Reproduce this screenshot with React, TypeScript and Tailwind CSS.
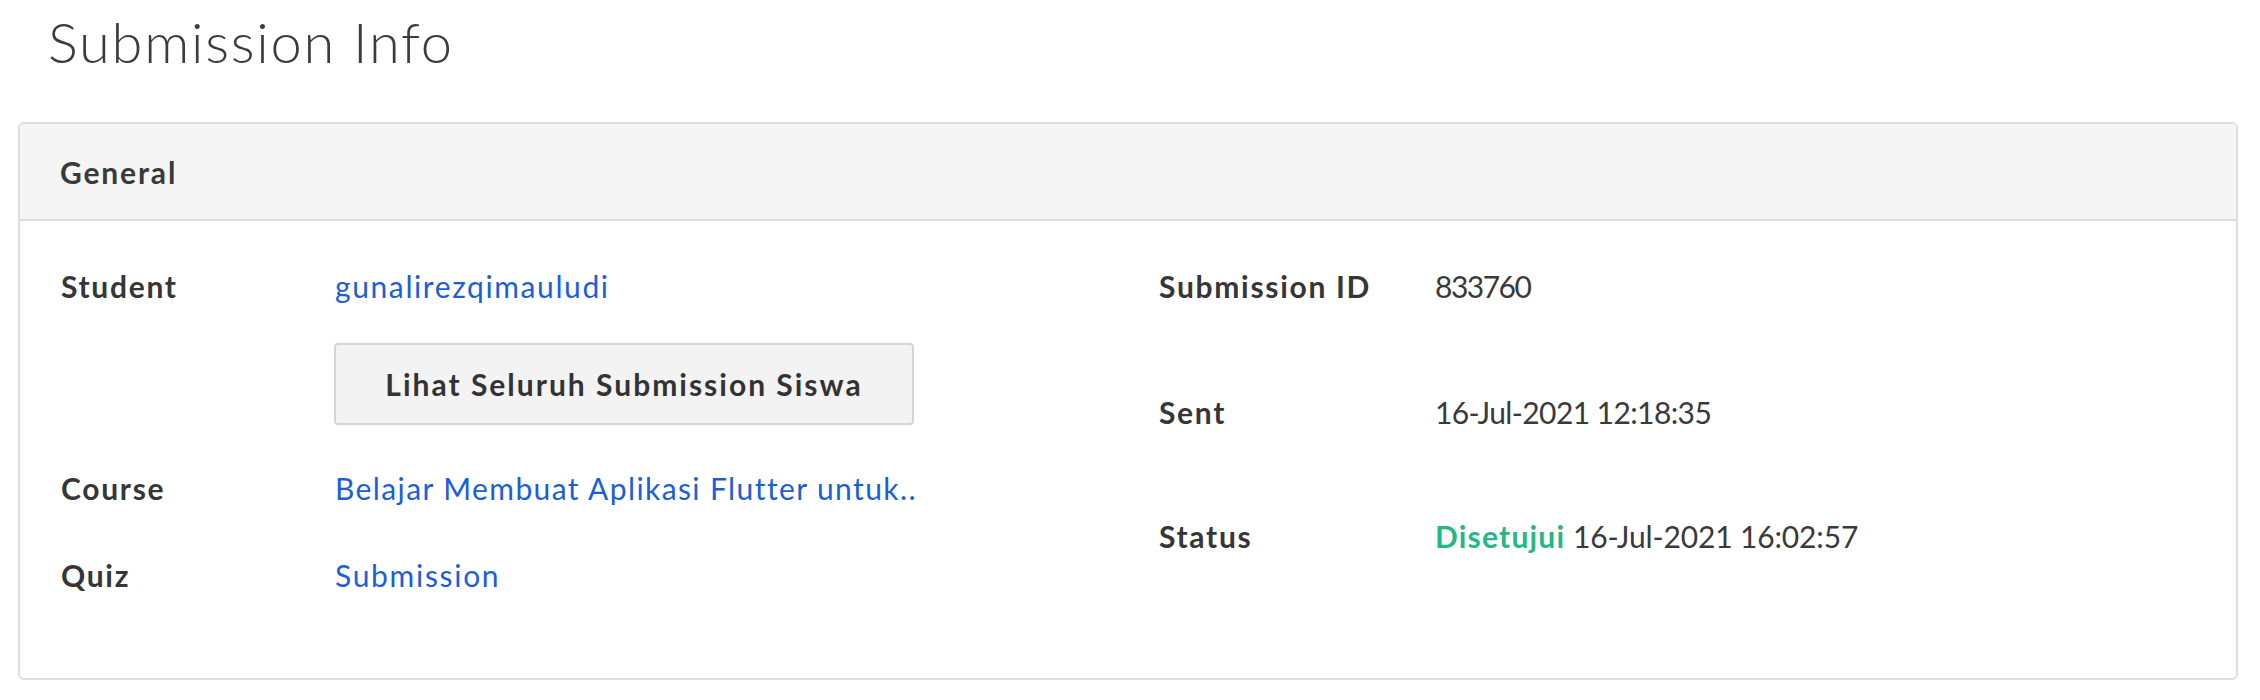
import React from "react";

const font = { fontFamily: "Lato, 'Open Sans', 'Liberation Sans', sans-serif" };

function Label({ children, w }: { children: React.ReactNode; w: string }) {
  return (
    <div className={`${w} shrink-0 text-[30px] leading-[36px] font-bold tracking-[1.7px] text-[#363636]`}>
      {children}
    </div>
  );
}

export default function App() {
  return (
    <div className="w-[2260px] h-[700px] bg-white overflow-hidden" style={font}>
      <h1 className="pt-[8px] pl-[48px] text-[56px] leading-[67px] font-light tracking-[1.75px] text-[#3c3c3c]">
        Submission Info
      </h1>
      <div className="mt-[47px] ml-[18px] w-[2220px] h-[558px] border-2 border-[#dedede] rounded-[6px] overflow-hidden">
        <div className="bg-[#f5f5f5] border-b-2 border-[#dcdcdc] pt-[30px] pb-[29px] pl-[40px]">
          <div className="text-[30px] leading-[36px] font-bold tracking-[1.85px] text-[#3a3a3a]">General</div>
        </div>
        <div className="grid grid-cols-[1098px_1fr] pl-[41px] pt-[47px]">
          <div className="flex flex-col">
            <div className="flex">
              <Label w="w-[274px]">Student</Label>
              <a className="text-[30px] leading-[36px] tracking-[1.6px] text-[#1b5fd8]">gunalirezqimauludi</a>
            </div>
            <div className="flex mt-[39px]">
              <div className="w-[273px] shrink-0" />
              <button className="w-[580px] h-[82px] border-2 border-[#d6d6d8] bg-[#f3f3f3] rounded-[4px] text-[30px] leading-[36px] font-bold tracking-[2px] text-[#333336]">
                Lihat Seluruh Submission Siswa
              </button>
            </div>
            <div className="flex mt-[45px]">
              <Label w="w-[274px]">Course</Label>
              <a className="text-[30px] leading-[36px] tracking-[1.4px] text-[#1b5fd8]">
                Belajar Membuat Aplikasi Flutter untuk..
              </a>
            </div>
            <div className="flex mt-[51px]">
              <Label w="w-[274px]">Quiz</Label>
              <a className="text-[30px] leading-[36px] tracking-[1.7px] text-[#1b5fd8]">Submission</a>
            </div>
          </div>
          <div className="flex flex-col">
            <div className="flex">
              <Label w="w-[276px]">Submission ID</Label>
              <div className="text-[30px] leading-[36px] tracking-[-1.5px] text-[#3a3a3a]">833760</div>
            </div>
            <div className="flex mt-[90px]">
              <Label w="w-[276px]">Sent</Label>
              <div className="text-[30px] leading-[36px] tracking-[-0.6px] text-[#3a3a3a]">16-Jul-2021 12:18:35</div>
            </div>
            <div className="flex mt-[88px]">
              <Label w="w-[276px]">Status</Label>
              <div className="text-[30px] leading-[36px] text-[#3a3a3a]">
                <span className="font-bold tracking-[1.2px] text-[#25b882]">Disetujui</span>{" "}
                <span className="tracking-[-0.15px]">16-Jul-2021 16:02:57</span>
              </div>
            </div>
          </div>
        </div>
      </div>
    </div>
  );
}
